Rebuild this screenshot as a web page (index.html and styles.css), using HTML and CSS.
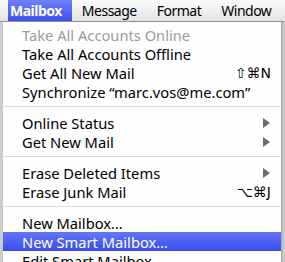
FILE: index.html
```html
<!DOCTYPE html>
<html lang="en">
<head>
<meta charset="UTF-8">
<meta name="viewport" content="width=device-width, initial-scale=1.0">
<title>Mailbox menu</title>
<link rel="stylesheet" href="styles.css">
</head>
<body>
<div class="menubar">
  <span class="title active">Mailbox</span>
  <span class="title">Message</span>
  <span class="title">Format</span>
  <span class="title">Window</span>
</div>

<div class="menu">
  <div class="item disabled"><span>Take All Accounts Online</span></div>
  <div class="item"><span>Take All Accounts Offline</span></div>
  <div class="item"><span>Get All New Mail</span><span class="key">&#8679;&#8984;N</span></div>
  <div class="item"><span>Synchronize “marc.vos@me.com”</span></div>
  <div class="sep"></div>
  <div class="item"><span>Online Status</span><span class="arrow"></span></div>
  <div class="item"><span>Get New Mail</span><span class="arrow"></span></div>
  <div class="sep"></div>
  <div class="item"><span>Erase Deleted Items</span><span class="arrow"></span></div>
  <div class="item"><span>Erase Junk Mail</span><span class="key">&#8997;&#8984;J</span></div>
  <div class="sep"></div>
  <div class="item"><span>New Mailbox…</span></div>
  <div class="item selected"><span>New Smart Mailbox…</span></div>
  <div class="item"><span>Edit Smart Mailbox…</span></div>
</div>
</body>
</html>
```

FILE: styles.css
```css
body {
  margin: 0;
  width: 285px;
  height: 262px;
  overflow: hidden;
  background-color: #c9ccd1;
  font-family: "Noto Sans", "DejaVu Sans", sans-serif;
  font-size: 14.7px;
  color: #000;
}

.menubar {
  display: flex;
  height: 21px;
  padding-left: 8px;
  background: linear-gradient(#fbfbfb, #e2e2e2);
  border-bottom: 1px solid #9c9c9c;
  white-space: nowrap;
  font-size: 14px;
  letter-spacing: -0.5px;
}

.title {
  padding: 0 10px;
  line-height: 21px;
}

.title.active {
  padding: 0 10px 0 2px;
  font-weight: bold;
  color: #fff;
  background: linear-gradient(#6f82f7, #3a4ef0);
}

.menu {
  width: 278px;
  margin-left: 3px;
  padding-top: 3px;
  background-color: rgba(255, 255, 255, 0.97);
  box-shadow: 1px 0 2px rgba(0, 0, 0, 0.25);
}

.item {
  display: flex;
  justify-content: space-between;
  align-items: center;
  height: 19px;
  padding: 0 10px 0 19px;
  white-space: nowrap;
}

.item.disabled {
  color: #9b9b9b;
}

.item.selected {
  color: #fff;
  background: linear-gradient(#6476f4, #384cef);
}

.key {
  font-family: "DejaVu Sans", sans-serif;
  font-size: 14px;
}

.arrow {
  width: 0;
  height: 0;
  margin-right: 1px;
  border-top: 5px solid transparent;
  border-bottom: 5px solid transparent;
  border-left: 7px solid #6a6a6a;
}

.sep {
  height: 12px;
  background: linear-gradient(transparent 5px, #dcdcdc 5px, #dcdcdc 6px, transparent 6px);
}
```
